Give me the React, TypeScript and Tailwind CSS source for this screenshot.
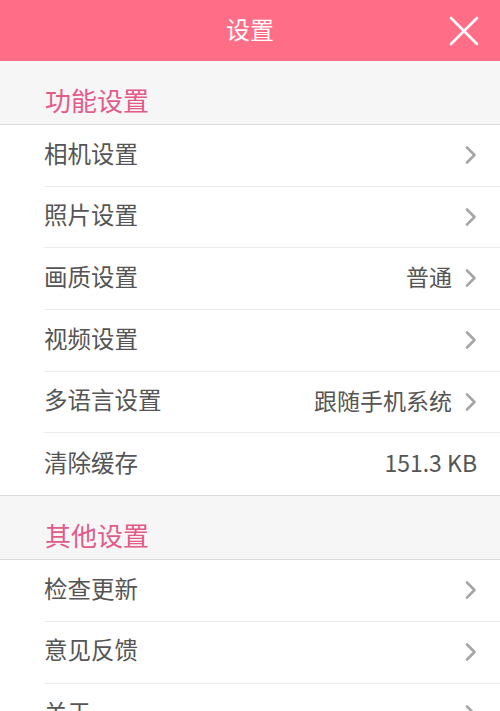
import React from "react";

const font = { fontFamily: '"Noto Sans CJK SC", "Noto Sans", Roboto, sans-serif' };

function Chevron() {
  return (
    <svg width="14" height="20" viewBox="0 0 14 20" className="shrink-0 mt-[3px]">
      <path d="M3 2.5 L10.5 10 L3 17.5" fill="none" stroke="#a6a6a6" strokeWidth="2.6" strokeLinecap="round" strokeLinejoin="round" />
    </svg>
  );
}

type Row = { label: string; value?: string; arrow: boolean };

function Section({ title, rows, last }: { title: string; rows: Row[]; last?: boolean }) {
  return (
    <div>
      <div className="h-[64px] bg-[#f6f6f6] border-b border-[#dcdcdc] flex items-center pl-[45px] pt-[14px]">
        <span className="text-[26px] text-[#e25b8a] leading-none">{title}</span>
      </div>
      <div className="bg-white pl-[44px]">
        {rows.map((r, i) => (
          <div
            key={r.label}
            className={
              "h-[61.7px] flex items-center pr-[22px] pb-[4px] " +
              (i < rows.length - 1 ? "border-b border-[#ebebeb]" : "")
            }
          >
            <span className="flex-1 text-[23.5px] text-[#555555] leading-none">{r.label}</span>
            {r.value && (
              <span className={"text-[23px] text-[#555555] leading-none " + (r.arrow ? "mr-[12px]" : "mr-[1px]")}>{r.value}</span>
            )}
            {r.arrow && <Chevron />}
          </div>
        ))}
      </div>
      {!last && <div className="h-px bg-[#dcdcdc]" />}
    </div>
  );
}

export default function App() {
  return (
    <div style={font} className="w-[500px] h-[711px] overflow-hidden bg-white">
      <div className="h-[61px] bg-[#ff6d86] relative flex items-center justify-center pb-[3px]">
        <span className="text-white text-[24px] leading-none">设置</span>
        <svg className="absolute right-[20px] top-[15px]" width="32" height="32" viewBox="0 0 32 32">
          <path d="M3 3 L29 29 M29 3 L3 29" stroke="white" strokeWidth="2.6" strokeLinecap="round" />
        </svg>
      </div>
      <Section
        title="功能设置"
        rows={[
          { label: "相机设置", arrow: true },
          { label: "照片设置", arrow: true },
          { label: "画质设置", value: "普通", arrow: true },
          { label: "视频设置", arrow: true },
          { label: "多语言设置", value: "跟随手机系统", arrow: true },
          { label: "清除缓存", value: "151.3 KB", arrow: false },
        ]}
      />
      <Section
        title="其他设置"
        last
        rows={[
          { label: "检查更新", arrow: true },
          { label: "意见反馈", arrow: true },
          { label: "关于", arrow: true },
        ]}
      />
    </div>
  );
}
